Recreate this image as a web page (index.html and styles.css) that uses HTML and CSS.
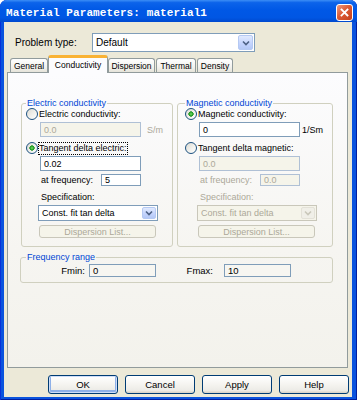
FILE: index.html
```html
<!DOCTYPE html>
<html>
<head>
<meta charset="utf-8">
<title>Material Parameters</title>
<link rel="stylesheet" href="styles.css">
</head>
<body>
<div class="window">
  <div class="titlebar">
    <span class="title">Material Parameters: material1</span>
    <span class="close"><svg width="9" height="9" viewBox="0 0 9 9"><path d="M1.5 1.5L7.5 7.5M7.5 1.5L1.5 7.5" stroke="#fff" stroke-width="1.8" stroke-linecap="square"/></svg></span>
  </div>
  <div class="client">
    <div class="problem-row">
      <span class="problem-label">Problem type:</span>
      <div class="combo combo-lg">
        <span class="combo-text">Default</span>
        <span class="combo-btn"><svg width="8" height="6" viewBox="0 0 8 6"><path d="M1 1.5L4 4.5L7 1.5" fill="none" stroke="#4D6185" stroke-width="1.6"/></svg></span>
      </div>
    </div>
    <div class="tabs">
      <div class="tab t-general">General</div>
      <div class="tab tab-active t-cond">Conductivity</div>
      <div class="tab t-disp">Dispersion</div>
      <div class="tab t-therm">Thermal</div>
      <div class="tab t-dens">Density</div>
    </div>
    <div class="panel">
      <div class="groups">
        <fieldset class="group group-e">
          <legend class="legend">Electric conductivity</legend>
          <div class="radio-row"><span class="radio"></span><span>Electric conductivity:</span></div>
          <div class="edit-row"><div class="edit edit-main is-disabled">0.0</div><span class="unit unit-wide dim">S/m</span></div>
          <div class="radio-row r2"><span class="radio checked"></span><span class="focus">Tangent delta electric:</span></div>
          <div class="edit-row"><div class="edit edit-main">0.02</div></div>
          <div class="freq-row"><span class="freq-label">at frequency:</span><div class="edit edit-small">5</div></div>
          <div class="spec-label">Specification:</div>
          <div class="combo combo-sm">
            <span class="combo-text">Const. fit tan delta</span>
            <span class="combo-btn"><svg width="8" height="6" viewBox="0 0 8 6"><path d="M1 1.5L4 4.5L7 1.5" fill="none" stroke="#4D6185" stroke-width="1.6"/></svg></span>
          </div>
          <div class="btn-disp">Dispersion List...</div>
        </fieldset>
        <fieldset class="group group-m">
          <legend class="legend">Magnetic conductivity</legend>
          <div class="radio-row"><span class="radio checked"></span><span>Magnetic conductivity:</span></div>
          <div class="edit-row"><div class="edit edit-main">0</div><span class="unit">1/Sm</span></div>
          <div class="radio-row r2"><span class="radio"></span><span>Tangent delta magnetic:</span></div>
          <div class="edit-row"><div class="edit edit-main is-disabled">0.0</div></div>
          <div class="freq-row dim"><span class="freq-label">at frequency:</span><div class="edit edit-small is-disabled">0.0</div></div>
          <div class="spec-label dim">Specification:</div>
          <div class="combo combo-sm combo-disabled">
            <span class="combo-text">Const. fit tan delta</span>
            <span class="combo-btn"><svg width="8" height="6" viewBox="0 0 8 6"><path d="M1 1.5L4 4.5L7 1.5" fill="none" stroke="#C9C7BA" stroke-width="1.6"/></svg></span>
          </div>
          <div class="btn-disp">Dispersion List...</div>
        </fieldset>
      </div>
      <fieldset class="group group-freq">
        <legend class="legend">Frequency range</legend>
        <div class="range-row">
          <span class="range-label l-min">Fmin:</span>
          <div class="edit edit-range">0</div>
          <span class="range-label l-max">Fmax:</span>
          <div class="edit edit-range">10</div>
        </div>
      </fieldset>
    </div>
    <div class="buttons">
      <div class="btn btn-default">OK</div>
      <div class="btn">Cancel</div>
      <div class="btn">Apply</div>
      <div class="btn">Help</div>
    </div>
  </div>
</div>
</body>
</html>
```
FILE: styles.css
```css
html, body {
  margin: 0;
  padding: 0;
  background: #ffffff;
}

.window {
  width: 357px;
  height: 400px;
  display: flex;
  flex-direction: column;
  background: #0A53DE;
  border-radius: 7px 7px 0 0;
  overflow: hidden;
  font-family: "Liberation Sans", Arial, sans-serif;
  color: #000;
  box-shadow: inset 1px 0 0 #0831D9, inset -1px 0 0 #001EA0, inset 0 -1px 0 #001EA0;
}

.titlebar {
  height: 22px;
  flex: none;
  display: flex;
  justify-content: space-between;
  align-items: flex-start;
  padding: 0 4px 0 6px;
  background: linear-gradient(to bottom, #3C8EF6 0%, #0C63EA 12%, #0058E6 45%, #0056E3 80%, #0049CF 100%);
}

.title {
  font-family: "Liberation Mono", "DejaVu Sans Mono", monospace;
  font-weight: bold;
  font-size: 11px;
  line-height: 12px;
  margin-top: 7px;
  color: #ffffff;
  letter-spacing: 0.1px;
}

.close {
  width: 17px;
  height: 17px;
  margin-top: 4px;
  box-sizing: border-box;
  border: 1px solid #ffffff;
  border-radius: 3px;
  background: linear-gradient(135deg, #EE9A80 0%, #DC5B35 45%, #C4401C 100%);
  display: flex;
  align-items: center;
  justify-content: center;
}

.client {
  flex: 1;
  margin: 0 5px 3px 4px;
  background: #ECE9D8;
  display: flex;
  flex-direction: column;
}

.problem-row {
  display: flex;
  align-items: center;
  height: 19px;
  margin-top: 11px;
  padding-left: 11px;
}

.problem-label {
  width: 77px;
  font-size: 10px;
}

.combo {
  display: flex;
  box-sizing: border-box;
  border: 1px solid #7F9DB9;
  background: #ffffff;
}

.combo-lg {
  width: 163px;
  height: 19px;
}

.combo-text {
  flex: 1;
  display: flex;
  align-items: center;
  padding-left: 3px;
  font-size: 10px;
  white-space: nowrap;
  overflow: hidden;
}

.combo-btn {
  width: 15px;
  margin: 1px;
  box-sizing: border-box;
  border: 1px solid #B5C9F3;
  border-radius: 2px;
  background: linear-gradient(to bottom, #E1EAFE 0%, #C3D3FD 60%, #B4C8F6 100%);
  display: flex;
  align-items: center;
  justify-content: center;
}

.combo-sm {
  width: 120px;
  height: 16px;
  margin-left: 13px;
  margin-top: 2px;
}

.combo-sm .combo-text {
  font-size: 9px;
}

.combo-sm .combo-btn {
  width: 14px;
}

.combo-disabled {
  background: #F5F4EA;
  border-color: #C9C7BA;
  color: #ACA899;
}

.combo-disabled .combo-btn {
  background: #F0EFE8;
  border-color: #E3E1D8;
}

.tabs {
  display: flex;
  align-items: flex-end;
  height: 17px;
  margin-top: 3px;
  padding-left: 6px;
}

.tab {
  box-sizing: border-box;
  height: 14px;
  border: 1px solid #919B9C;
  border-bottom: none;
  border-radius: 3px 3px 0 0;
  background: linear-gradient(to bottom, #FFFFFF 0%, #F3F2EE 60%, #E6E4DA 100%);
  font-size: 8.5px;
  display: flex;
  align-items: center;
  justify-content: center;
  white-space: nowrap;
}

.tab-active {
  height: 18px;
  margin-bottom: -1px;
  background: #FCFCFE;
  border-top: 3px solid #F9B234;
  position: relative;
  z-index: 1;
  padding-bottom: 1px;
}

.t-general { width: 38px; }
.t-cond { width: 60px; }
.t-disp { width: 47px; }
.t-therm { width: 40px; margin-left: 1px; }
.t-dens { width: 36px; margin-left: 1px; }

.panel {
  box-sizing: border-box;
  width: 341px;
  height: 296px;
  margin-left: 3px;
  border: 1px solid #919B9C;
  background: linear-gradient(to bottom, #FCFCFE 0%, #F6F5F1 60%, #F3F2EC 100%);
  padding-left: 13px;
}

.groups {
  display: flex;
  gap: 4px;
  margin-top: 25px;
}

.group {
  margin: 0;
  padding: 0 0 8px 3px;
  border: 1px solid #D0D0BF;
  border-radius: 3px;
  box-sizing: border-box;
  min-width: 0;
}

.group-e { width: 152px; }
.group-m { width: 156px; padding-left: 6px; }

.legend {
  font-size: 9px;
  line-height: 10px;
  color: #0046D5;
  padding: 0 1px;
  margin-left: 1px;
}

.radio-row {
  display: flex;
  align-items: center;
  gap: 1px;
  height: 12px;
  margin-left: 1px;
  font-size: 9px;
  white-space: nowrap;
}

.r2 { margin-top: 5px; }

.radio {
  width: 12px;
  height: 12px;
  flex: none;
  box-sizing: border-box;
  border: 1px solid #1C5180;
  border-radius: 50%;
  background: linear-gradient(135deg, #DCDBD3 0%, #F3F3EF 60%, #FFFFFF 100%);
}

.radio.checked {
  background: radial-gradient(circle at 50% 50%, #7BDD6B 0, #2FA82F 1.6px, #1E941E 2.4px, transparent 2.9px), linear-gradient(135deg, #DCDBD3 0%, #F3F3EF 60%, #FFFFFF 100%);
}

.focus {
  outline: 1px dotted #000;
  outline-offset: 0;
  line-height: 11px;
}

.edit-row {
  display: flex;
  align-items: center;
  height: 15px;
  margin-top: 2px;
}

.edit {
  box-sizing: border-box;
  border: 1px solid #7F9DB9;
  background: #ffffff;
  font-size: 9px;
  padding-left: 3px;
  display: flex;
  align-items: center;
  white-space: nowrap;
}

.edit-main {
  width: 101px;
  height: 15px;
  margin-left: 15px;
}

.edit-small {
  width: 40px;
  height: 12px;
}

.is-disabled {
  background: #F5F4EA;
  border-color: #AFC0D5;
  color: #ACA899;
}

.unit {
  margin-left: 2px;
  font-size: 9px;
}

.unit-wide { margin-left: 6px; }

.dim { color: #ACA899; }

.freq-row {
  display: flex;
  align-items: center;
  height: 12px;
  margin-top: 3px;
  margin-left: 16px;
  font-size: 9px;
}

.freq-label {
  width: 60px;
  white-space: nowrap;
}

.spec-label {
  height: 11px;
  line-height: 11px;
  margin-top: 6px;
  margin-left: 16px;
  font-size: 9px;
}

.btn-disp {
  box-sizing: border-box;
  width: 117px;
  height: 13px;
  margin-top: 4px;
  margin-left: 14px;
  border: 1px solid #C9C7BA;
  border-radius: 3px;
  background: #F5F4EA;
  color: #ACA899;
  font-size: 9px;
  display: flex;
  align-items: center;
  justify-content: center;
}

.group-freq {
  width: 313px;
  margin-left: -1px;
  margin-top: 5px;
  padding: 0 0 5px 0;
}

.group-freq .legend {
  margin-left: 5px;
}

.range-row {
  display: flex;
  align-items: center;
  height: 13px;
  margin-top: 2px;
  font-size: 9.5px;
}

.range-label {
  text-align: right;
  white-space: nowrap;
}

.l-min { width: 64px; margin-right: 4px; }
.l-max { width: 57px; margin-right: 11px; }

.edit-range {
  width: 67px;
  height: 13px;
  background: #F7F6F1;
  font-size: 9.5px;
}

.buttons {
  display: flex;
  justify-content: flex-end;
  gap: 7px;
  margin-top: 7px;
  padding-right: 3px;
}

.btn {
  box-sizing: border-box;
  width: 70px;
  height: 19px;
  border: 1px solid #003C74;
  border-radius: 3px;
  background: linear-gradient(to bottom, #FFFFFF 0%, #F5F4F0 50%, #ECEBE6 85%, #D6D0C5 100%);
  font-size: 9.5px;
  display: flex;
  align-items: center;
  justify-content: center;
}

.btn-default {
  box-shadow: inset 0 0 0 1px #CEDDF8, inset 0 -1px 0 2px #8EB0E8;
}
```
